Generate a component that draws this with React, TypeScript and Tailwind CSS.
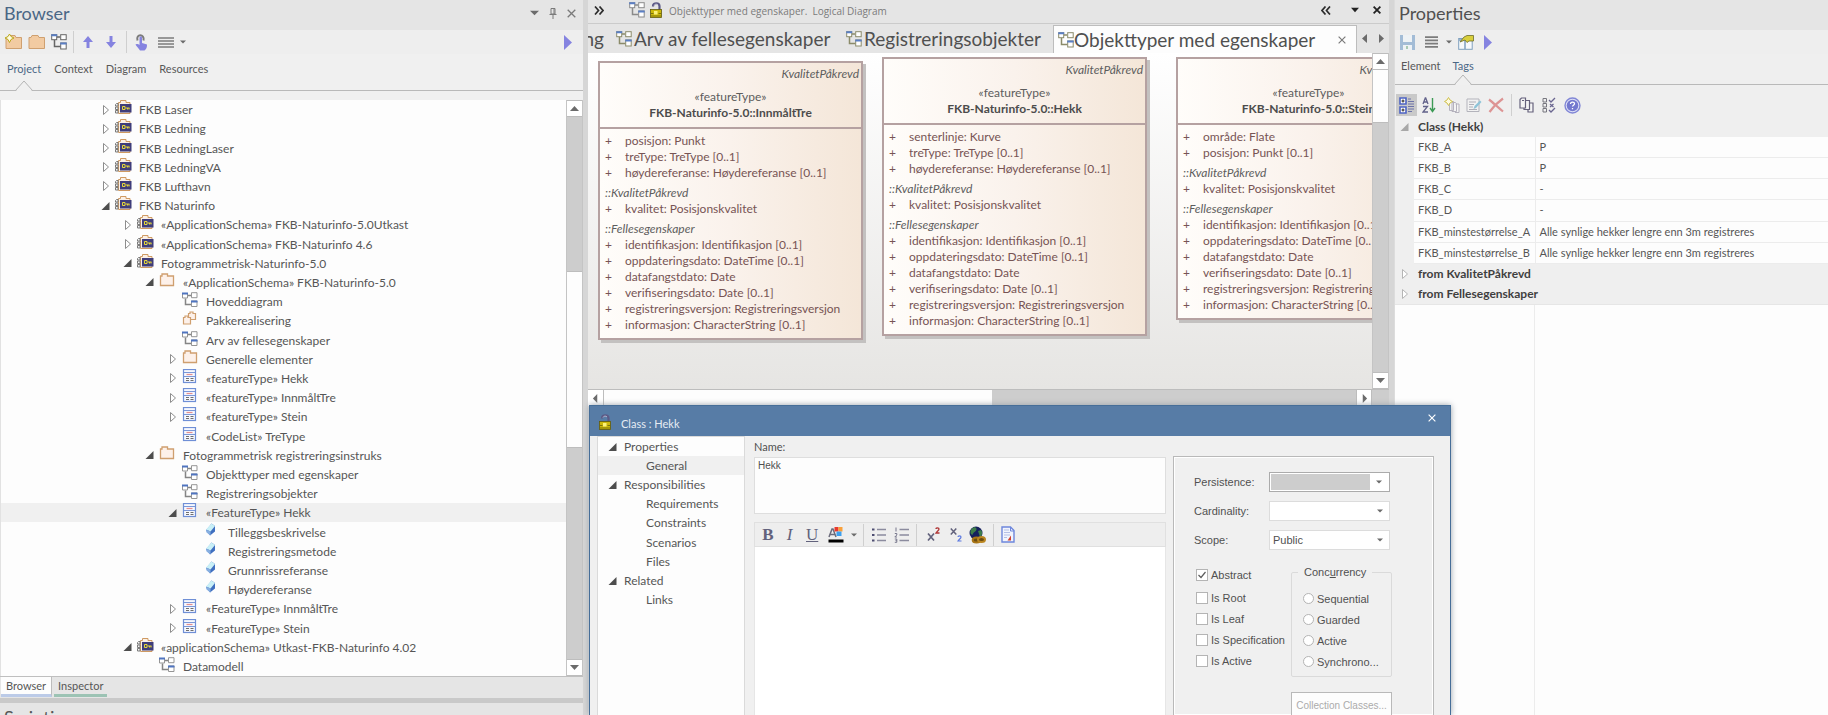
import type { ReactNode } from "react";

type IconName = "locked" | "folder" | "diagram" | "packages" | "class" | "attribute";

interface TreeItem {
  level: number;
  icon: IconName;
  label: string;
  open?: boolean;
  selected?: boolean;
}

const TREE: TreeItem[] = [
  { level: 0, icon: "locked", label: "FKB Laser", open: false },
  { level: 0, icon: "locked", label: "FKB Ledning", open: false },
  { level: 0, icon: "locked", label: "FKB LedningLaser", open: false },
  { level: 0, icon: "locked", label: "FKB LedningVA", open: false },
  { level: 0, icon: "locked", label: "FKB Lufthavn", open: false },
  { level: 0, icon: "locked", label: "FKB Naturinfo", open: true },
  { level: 1, icon: "locked", label: "«ApplicationSchema» FKB-Naturinfo-5.0Utkast", open: false },
  { level: 1, icon: "locked", label: "«ApplicationSchema» FKB-Naturinfo 4.6", open: false },
  { level: 1, icon: "locked", label: "Fotogrammetrisk-Naturinfo-5.0", open: true },
  { level: 2, icon: "folder", label: "«ApplicationSchema» FKB-Naturinfo-5.0", open: true },
  { level: 3, icon: "diagram", label: "Hoveddiagram" },
  { level: 3, icon: "packages", label: "Pakkerealisering" },
  { level: 3, icon: "diagram", label: "Arv av fellesegenskaper" },
  { level: 3, icon: "folder", label: "Generelle elementer", open: false },
  { level: 3, icon: "class", label: "«featureType» Hekk", open: false },
  { level: 3, icon: "class", label: "«featureType» InnmåltTre", open: false },
  { level: 3, icon: "class", label: "«featureType» Stein", open: false },
  { level: 3, icon: "class", label: "«CodeList» TreType" },
  { level: 2, icon: "folder", label: "Fotogrammetrisk registreringsinstruks", open: true },
  { level: 3, icon: "diagram", label: "Objekttyper med egenskaper" },
  { level: 3, icon: "diagram", label: "Registreringsobjekter" },
  { level: 3, icon: "class", label: "«FeatureType» Hekk", open: true, selected: true },
  { level: 4, icon: "attribute", label: "Tilleggsbeskrivelse" },
  { level: 4, icon: "attribute", label: "Registreringsmetode" },
  { level: 4, icon: "attribute", label: "Grunnrissreferanse" },
  { level: 4, icon: "attribute", label: "Høydereferanse" },
  { level: 3, icon: "class", label: "«FeatureType» InnmåltTre", open: false },
  { level: 3, icon: "class", label: "«FeatureType» Stein", open: false },
  { level: 1, icon: "locked", label: "«applicationSchema» Utkast-FKB-Naturinfo 4.02", open: true },
  { level: 2, icon: "diagram", label: "Datamodell" },
];

const INDENT = ["pl-[100px]", "pl-[122px]", "pl-[144px]", "pl-[167px]", "pl-[189px]"];

const COMMON = [
  "identifikasjon: Identifikasjon [0..1]",
  "oppdateringsdato: DateTime [0..1]",
  "datafangstdato: Date",
  "verifiseringsdato: Date [0..1]",
  "registreringsversjon: Registreringsversjon",
  "informasjon: CharacterString [0..1]",
];

/* ---------- glyphs ---------- */

function DiagramGlyph({ head = "#5b7fc4", line = "#8a8a8a" }: { head?: string; line?: string }) {
  return (
    <svg viewBox="0 0 16 16" className="h-4 w-4 shrink-0" fill="none" stroke={line}>
      <path d="M6 3h3M3.500 6v6.500h6" strokeWidth="1.500" />
      <rect x="0.700" y="0.700" width="5" height="5" fill="#fff" />
      <rect x="9.700" y="0.700" width="5.500" height="5" fill="#fff" />
      <rect x="9.700" y="9" width="5.500" height="6" fill="#fff" />
      <path d="M0.200 1.200h6M9.200 9.500h6.500" stroke={head} strokeWidth="2" />
    </svg>
  );
}

function TreeGlyph({ name }: { name: IconName }) {
  return (
    <svg viewBox="0 0 18 19" className="h-[19px] w-[18px] shrink-0" fill="none">
      {name === "locked" && (
        <>
          <path d="M4.500 13.500v-11h2v-2h5.500v2h4v11z" stroke="#cf9a62" fill="#fbf0e6" />
          <path d="M2.500 3.500h1.500v2.500H1.500V4.500zM1.500 7h2.500v2.500H1.500zM1.500 10.500h2.500V13H1.500z" stroke="#7a7a7a" fill="#f4f4f4" />
          <rect x="6" y="4" width="11.500" height="8.500" fill="#3f3d7a" />
          <path d="M8.500 6.500h2.500v3H8.500zM11.500 8h4M13.500 8v1.500M15 8v1.500" stroke="#e6d83a" />
        </>
      )}
      {name === "folder" && (
        <path d="M2.500 12.500V3h1.500V1h5.500v2h6v9.500z" stroke="#cf9f6f" fill="#fdf1ea" strokeWidth="1.300" />
      )}
      {name === "diagram" && (
        <>
          <path d="M7 3.500h3M4.500 6.500v6h6" stroke="#858585" strokeWidth="1.500" />
          <path d="M1.500 1.500h5v4.500h-5zM10.500 0.700h5.500v5h-5.500zM10.500 9h5.500v5.500h-5.500z" stroke="#959595" fill="#fff" />
          <path d="M1 1.500h6M10 9.500h6.500" stroke="#4f74c0" strokeWidth="2" />
        </>
      )}
      {name === "packages" && (
        <g stroke="#cf9f6f" fill="#fdf1ea" strokeWidth="1.200">
          <path d="M7.500 8.500v-6h1.500V1h3v1.500h2.500v6z" />
          <path d="M2.500 13V6.500H4V5h3v1.500h2.500V13z" />
        </g>
      )}
      {name === "class" && (
        <>
          <rect x="2.500" y="0.500" width="12" height="13" fill="#f6f8fe" stroke="#6f8fd6" strokeWidth="1.200" />
          <path d="M3 3.500h11M3 7.500h11" stroke="#7a97d8" />
          <path d="M5.500 5.500h6" stroke="#e58f8f" strokeWidth="1.200" />
          <path d="M5 9.500h3M9.500 9.500h3M5 11.500h3M9.500 11.500h3" stroke="#6f6f6f" />
        </>
      )}
      {name === "attribute" && (
        <>
          <path d="M3 7.500 8.500 0.500 12 3v5.500L7 12.500z" fill="#3f6fc0" />
          <path d="M3 6.500 8.500 0.500 12 3 7.500 8.500z" fill="#c9f0f7" />
          <path d="M3 6.500 7.500 8.500v4L3.500 9.500z" fill="#86aee0" />
        </>
      )}
    </svg>
  );
}

function Twisty({ open, faint = false }: { open?: boolean; faint?: boolean }) {
  return (
    <svg viewBox="0 0 9 10" className="h-[10px] w-[9px] shrink-0" fill="none">
      {open === true && <path d="M8.500 1v8H0.500z" fill={faint ? "#a8a8a8" : "#4d4d4d"} />}
      {open === false && <path d="M2.500 0.500 7.500 5 2.500 9.500z" stroke={faint ? "#b5b5b5" : "#8d8d8d"} fill="#fff" />}
    </svg>
  );
}

function Caret({ dir = "down", color = "#6b6b6b", size = "h-[7px] w-[9px]" }: { dir?: "up" | "down" | "left" | "right"; color?: string; size?: string }) {
  const d = { up: "M0 6h8L4 1z", down: "M0 1h8L4 6z", left: "M6 0v7L1 3.500z", right: "M2 0v7l5-3.500z" }[dir];
  return (
    <svg viewBox="0 0 8 7" className={`${size} shrink-0`} preserveAspectRatio="none">
      <path d={d} fill={color} />
    </svg>
  );
}

function CloseGlyph({ color = "#7a7a7a", size = "h-[9px] w-[9px]", weight = 1.3 }: { color?: string; size?: string; weight?: number }) {
  return (
    <svg viewBox="0 0 9 9" className={`${size} shrink-0`}>
      <path d="m0.700 0.700 7.600 7.600m0-7.600-7.600 7.600" stroke={color} strokeWidth={weight} />
    </svg>
  );
}

function Lock() {
  return (
    <svg viewBox="0 0 12 16" className="h-4 w-3 shrink-0" fill="none">
      <path d="M3 4.500V4c0-3.700 6.500-3.700 6.500 0v4" stroke="#5c5a86" strokeWidth="2.200" />
      <path d="M4 3.500c0.500-1.500 3-2 4-0.500" stroke="#c8c6dc" strokeWidth="0.800" />
      <rect x="0.500" y="7.500" width="11" height="8" fill="#cdb90a" stroke="#5f5a10" strokeWidth="0.800" />
      <path d="M4 9h3.500v3.500H4z" fill="#fbf27a" />
      <path d="M1 11.500h2.500M8.500 11.500H11M1 14h10" stroke="#7d740a" />
    </svg>
  );
}

function MenuGlyph({ size = "h-[11px] w-4" }: { size?: string }) {
  return (
    <svg viewBox="0 0 16 11" className={`${size} shrink-0`} preserveAspectRatio="none">
      <path d="M0 1h16M0 4h16M0 7h16M0 10h16" stroke="#7c7c7c" strokeWidth="1.500" />
    </svg>
  );
}

function Play() {
  return (
    <svg viewBox="0 0 8 15" className="h-[15px] w-2 shrink-0">
      <path d="M0 0v15l8-7.500z" fill="#8583e0" />
    </svg>
  );
}

function FolderGlyph({ star = false }: { star?: boolean }) {
  return (
    <svg viewBox="0 0 17 16" className="h-4 w-[17px] shrink-0">
      <path d="M1 14.500v-11h2l1-2h6l1 2h5.500v11z" fill="#f2cba2" stroke="#cfa070" />
      {star && <path d="M4.500 0 6 2.500 9 4 6 5.500 4.500 8.500 3 5.500 0 4l3-1.500z" fill="#fffbe0" stroke="#b9a81c" />}
    </svg>
  );
}

function Arrow({ down = false }: { down?: boolean }) {
  return (
    <svg viewBox="0 0 10 12" className="h-3 w-[10px] shrink-0">
      <path d={down ? "M3.500 0h3v6H10l-5 6-5-6h3.500z" : "M3.500 12h3V6H10L5 0 0 6h3.500z"} fill="#8583e0" />
    </svg>
  );
}

function Notch() {
  return (
    <svg viewBox="0 0 18 11" className="absolute -bottom-px left-1/2 h-[11px] w-[18px] -translate-x-1/2" fill="none">
      <path d="M1 11 9 1l8 10z" fill="#f0f0f0" />
      <path d="M0.500 10.500 9 1l8.500 9.500" stroke="#b4b4b4" />
    </svg>
  );
}

/* ---------- shared parts ---------- */

function IconButton({ label, className = "", children }: { label: string; className?: string; children: ReactNode }) {
  return (
    <button type="button" aria-label={label} className={`flex shrink-0 items-center justify-center ${className}`}>
      {children}
    </button>
  );
}

function PanelTab({ label, active = false }: { label: string; active?: boolean }) {
  return (
    <button type="button" className={`relative flex h-full justify-center text-[11px] leading-4 ${active ? "text-[#4a6785]" : "text-[#585858]"}`}>
      {label}
      {active && <Notch />}
    </button>
  );
}

function Separator() {
  return <span className="block h-[22px] w-px shrink-0 bg-[#cfcfcf]" />;
}

/* ---------- browser ---------- */

function BrowserPanel() {
  return (
    <section className="flex w-[583px] shrink-0 flex-col bg-[#f0f0f0]">
      <header className="flex h-[30px] shrink-0 items-center bg-[#e5e5e5] pr-[7px] pb-1 pl-1">
        <h1 className="flex-1 text-[18px] leading-6 text-[#4a6785]">Browser</h1>
        <div className="flex items-center gap-[10px]">
          <IconButton label="Window options"><Caret size="h-[6px] w-[9px]" /></IconButton>
          <IconButton label="Pin">
            <svg viewBox="0 0 8 11" className="h-[11px] w-2" fill="none" stroke="#7a7a7a">
              <path d="M2 0.500h4v5.500H2zM0.500 6.500h7M4 7v4M5 1v5" />
            </svg>
          </IconButton>
          <IconButton label="Close"><CloseGlyph /></IconButton>
        </div>
      </header>
      <div className="flex h-6 shrink-0 items-center bg-[#eeeeee] pr-[11px] pl-[5px]">
        <IconButton label="New package"><FolderGlyph star /></IconButton>
        <IconButton label="New model" className="ml-[6px]"><FolderGlyph /></IconButton>
        <IconButton label="New diagram" className="mr-[6px] ml-[6px]"><DiagramGlyph line="#666" /></IconButton>
        <Separator />
        <IconButton label="Move up" className="ml-[9px]"><Arrow /></IconButton>
        <IconButton label="Move down" className="mr-[10px] ml-[13px]"><Arrow down /></IconButton>
        <Separator />
        <IconButton label="Locate" className="ml-2">
          <svg viewBox="0 0 13 17" className="h-[17px] w-[13px]">
            <path d="M2.500 6.500c-2-7 7.500-7 6 0" fill="none" stroke="#7c7c7c" strokeWidth="2" />
            <path d="M4.500 3.500c0-1.500 2.500-1.500 2.500 0V9l5 1.500c0 3-0.500 4.500-2.500 6H5C4 14.500 1 12 0.500 10.500 1 9.500 3.500 10 4.500 11z" fill="#8583e0" />
          </svg>
        </IconButton>
        <IconButton label="Menu" className="ml-[10px] gap-[6px]"><MenuGlyph /><Caret size="h-1 w-[6px]" /></IconButton>
        <span className="flex-1" />
        <IconButton label="Expand"><Play /></IconButton>
      </div>
      <nav className="flex h-[37px] shrink-0 gap-[13px] border-b border-[#b9b9b9] pt-[7px] pl-[7px]">
        <PanelTab label="Project" active />
        <PanelTab label="Context" />
        <PanelTab label="Diagram" />
        <PanelTab label="Resources" />
      </nav>
      <div className="mt-[9px] flex min-h-0 flex-1 border-l border-[#e2e2e2]">
        <ul className="flex min-w-0 flex-1 flex-col bg-[#fdfdfd] text-[12px] leading-[19px] text-[#565656]">
          {TREE.map((item, i) => (
            <li key={i} className={`flex min-h-0 flex-1 items-center ${INDENT[item.level]} ${item.selected ? "bg-[#f0f0f0]" : ""}`}>
              <Twisty open={item.open} />
              <span className="ml-1 flex items-center gap-[7px] whitespace-nowrap">
                <TreeGlyph name={item.icon} />
                {item.label}
              </span>
            </li>
          ))}
        </ul>
        <div className="flex w-[17px] flex-col border-x border-[#c4c4c4] bg-[#cdcdcd]">
          <IconButton label="Scroll up" className="h-[17px] border-y border-[#bdbdbd] bg-white"><Caret dir="up" /></IconButton>
          <span className="flex-[155]" />
          <span className="flex-[176] border-y border-[#bdbdbd] bg-[#fdfdfd]" />
          <span className="flex-[213]" />
          <IconButton label="Scroll down" className="h-[17px] border-y border-[#bdbdbd] bg-white"><Caret /></IconButton>
        </div>
      </div>
      <div className="flex h-[22px] shrink-0 border-t border-[#bfbfbf] bg-[#e5e5e5] text-[11px] leading-4 text-[#565656]">
        <button type="button" className="ml-px h-5 border-r border-b-[3px] border-r-[#bdbdbd] border-b-[#bccbe8] bg-[#fdfdfd] px-[5px]">Browser</button>
        <button type="button" className="ml-[2px] h-5 border-b-[3px] border-[#9cc3b4] px-1">Inspector</button>
      </div>
      <div className="h-[5px] shrink-0 bg-[#c9c9c9]" />
      <div className="h-3 shrink-0 overflow-hidden bg-[#e5e5e5] pt-[2px] pl-1">
        <h2 className="text-[18px] leading-6 text-[#565656]">Scripting</h2>
      </div>
    </section>
  );
}

/* ---------- diagram ---------- */

function AttributeList({ items }: { items: string[] }) {
  return (
    <ul>
      {items.map((text) => (
        <li key={text} className="flex whitespace-nowrap">
          <span className="w-5">+</span>
          {text}
        </li>
      ))}
    </ul>
  );
}

function ClassBox({ name, own, place }: { name: string; own: string[]; place: string }) {
  return (
    <article className={`absolute w-[265px] border-2 border-[#b5a1a1] bg-linear-to-r from-[#fffdfa] via-[#faf2ec] to-[#f4e6d8] text-[12px] leading-4 text-[#775454] shadow-[3px_3px_0_#c3c1c0] ${place}`}>
      <header className="border-b-2 border-[#b5a1a1] pb-[6px] text-center text-[#5d5d5d]">
        <p className="pt-[3px] pr-[2px] text-right italic">KvalitetPåkrevd</p>
        <p className="pt-[7px]">«featureType»</p>
        <h3 className="font-bold text-[#4c4c4c]">FKB-Naturinfo-5.0::{name}</h3>
      </header>
      <div className="pt-1 pb-[5px] pl-[5px]">
        <AttributeList items={own} />
        <p className="pt-1 text-[#5d5d5d] italic">::KvalitetPåkrevd</p>
        <AttributeList items={["kvalitet: Posisjonskvalitet"]} />
        <p className="pt-1 text-[#5d5d5d] italic">::Fellesegenskaper</p>
        <AttributeList items={COMMON} />
      </div>
    </article>
  );
}

function DiagramTab({ label, width }: { label: string; width: string }) {
  return (
    <button type="button" className={`flex shrink-0 items-center gap-[2px] pl-[5px] ${width}`}>
      <DiagramGlyph line="#8b8b6a" />
      {label}
    </button>
  );
}

function DiagramArea() {
  return (
    <main className="flex min-w-0 flex-1 flex-col border-x-[5px] border-[#d6d6d6] bg-[#e5e5e5]">
      <header className="flex h-6 shrink-0 items-center border-b border-[#cbcbcb] pr-2 pb-[3px] pl-[6px]">
        <IconButton label="Show panels">
          <svg viewBox="0 0 10 9" className="h-[9px] w-[10px]" fill="none" stroke="#2d2d2d" strokeWidth="1.700">
            <path d="m1 0.500 3.500 4L1 8.500M5.500 0.500l3.500 4-3.500 4" />
          </svg>
        </IconButton>
        <span className="ml-[25px] flex items-center gap-[5px]">
          <DiagramGlyph />
          <Lock />
        </span>
        <p className="ml-[7px] flex-1 pt-[2px] font-['Open_Sans',sans-serif] text-[10px] leading-4 whitespace-pre text-[#7b7b7b]">Objekttyper med egenskaper.  Logical Diagram</p>
        <IconButton label="Hide panels">
          <svg viewBox="0 0 10 9" className="h-[9px] w-[10px]" fill="none" stroke="#2d2d2d" strokeWidth="1.700">
            <path d="m4.500 0.500-3.500 4 3.500 4M9 0.500l-3.500 4 3.500 4" />
          </svg>
        </IconButton>
        <IconButton label="Diagram options" className="ml-5"><Caret color="#222" size="h-[6px] w-2" /></IconButton>
        <IconButton label="Close diagram" className="ml-[14px]"><CloseGlyph color="#222" size="h-2 w-2" weight={2} /></IconButton>
      </header>
      <div className="flex h-[29px] shrink-0 text-[19px] leading-6 text-[#505050]">
        <div className="flex min-w-0 flex-1 justify-end overflow-hidden">
          <button type="button" className="shrink-0 pr-[7px]">ng</button>
          <DiagramTab label="Arv av fellesegenskaper" width="w-[230px]" />
          <DiagramTab label="Registreringsobjekter" width="w-[212px]" />
          <div className="mt-px flex w-[304px] shrink-0 items-center border-x border-t border-[#bdbdbd] bg-[#fdfdfd] pr-[10px] pl-1">
            <button type="button" className="flex flex-1 items-center">
              <DiagramGlyph line="#8b8b6a" />
              Objekttyper med egenskaper
            </button>
            <IconButton label="Close tab"><CloseGlyph size="h-2 w-2" /></IconButton>
          </div>
        </div>
        <div className="flex w-8 shrink-0 items-center gap-2 pl-1">
          <IconButton label="Previous tab"><Caret dir="left" size="h-[9px] w-2" /></IconButton>
          <IconButton label="Next tab"><Caret dir="right" size="h-[9px] w-2" /></IconButton>
        </div>
      </div>
      <div className="flex h-[336px] shrink-0">
        <div className="relative min-w-0 flex-1 overflow-hidden bg-linear-to-b from-white to-[#e6e5e3]">
          <ClassBox name="InnmåltTre" own={["posisjon: Punkt", "treType: TreType [0..1]", "høydereferanse: Høydereferanse [0..1]"]} place="top-2 left-[10px]" />
          <ClassBox name="Hekk" own={["senterlinje: Kurve", "treType: TreType [0..1]", "høydereferanse: Høydereferanse [0..1]"]} place="top-1 left-[294px]" />
          <ClassBox name="Stein" own={["område: Flate", "posisjon: Punkt [0..1]"]} place="top-1 left-[588px]" />
        </div>
        <div className="flex w-[17px] flex-col border-x border-[#c4c4c4] bg-[#cdcdcd]">
          <IconButton label="Scroll up" className="h-[17px] border-y border-[#bdbdbd] bg-white"><Caret dir="up" /></IconButton>
          <span className="h-[53px] border-b border-[#bdbdbd] bg-[#fdfdfd]" />
          <span className="flex-1" />
          <IconButton label="Scroll down" className="h-[17px] border-y border-[#bdbdbd] bg-white"><Caret /></IconButton>
        </div>
      </div>
      <div className="flex h-[17px] shrink-0 border-t border-[#bdbdbd] bg-[#cdcdcd] pr-[17px]">
        <IconButton label="Scroll left" className="w-4 border-r border-[#bdbdbd] bg-white"><Caret dir="left" size="h-[9px] w-[7px]" /></IconButton>
        <span className="flex-[388] bg-[#fdfdfd]" />
        <span className="flex-[364]" />
        <IconButton label="Scroll right" className="w-4 border-x border-[#bdbdbd] bg-white"><Caret dir="right" size="h-[9px] w-[7px]" /></IconButton>
      </div>
    </main>
  );
}

/* ---------- properties ---------- */

const TAGS: [string, string][] = [
  ["FKB_A", "P"],
  ["FKB_B", "P"],
  ["FKB_C", "-"],
  ["FKB_D", "-"],
  ["FKB_minstestørrelse_A", "Alle synlige hekker lengre enn 3m registreres"],
  ["FKB_minstestørrelse_B", "Alle synlige hekker lengre enn 3m registreres"],
];

function GroupRow({ label, open }: { label: string; open: boolean }) {
  return (
    <tr>
      <td className="w-[19px] pl-[5px]"><Twisty open={open} faint /></td>
      <th scope="rowgroup" colSpan={2} className="pl-1 text-left text-[12px] font-bold text-[#3f3f3f]">{label}</th>
    </tr>
  );
}

function PropertiesPanel() {
  return (
    <aside className="flex w-[434px] shrink-0 flex-col border-l border-[#dcdcdc] bg-[#efefef]">
      <header className="flex h-[30px] shrink-0 items-center bg-[#e5e5e5] pb-1 pl-1">
        <h1 className="text-[18px] leading-6 text-[#505050]">Properties</h1>
      </header>
      <div className="flex h-6 shrink-0 items-center bg-[#eeeeee] pl-[5px]">
        <IconButton label="Save">
          <svg viewBox="0 0 15 15" className="h-[15px] w-[15px]">
            <path d="M0 0h15v15H0z" fill="#a3bcd6" />
            <path d="M3 0h9v7H3z" fill="#eef2f5" />
            <path d="M3 10h9v5H3z" fill="#eef2f5" />
            <path d="M6 11h2v3H6z" fill="#a9c9b4" />
          </svg>
        </IconButton>
        <IconButton label="Menu" className="ml-[10px] gap-2"><MenuGlyph size="h-3 w-[13px]" /><Caret size="h-1 w-[6px]" /></IconButton>
        <IconButton label="Edit properties" className="ml-[6px]">
          <svg viewBox="0 0 16 15" className="h-[15px] w-4">
            <rect x="0.700" y="3.500" width="13.500" height="10.800" fill="#f7fafc" stroke="#7fa0bf" />
            <path d="M1 5h13M7 6v8" stroke="#7fa0bf" strokeWidth="1.500" />
            <path d="M2 7 6 2l3-1.500h6.500V6H11L9 7.500 7 5z" fill="#d8cf3c" stroke="#6f6d2c" strokeWidth="0.800" />
          </svg>
        </IconButton>
        <IconButton label="Run" className="ml-[10px]"><Play /></IconButton>
      </div>
      <nav className="flex h-[31px] shrink-0 gap-3 border-b border-[#b9b9b9] pt-1 pl-[6px]">
        <PanelTab label="Element" />
        <PanelTab label="Tags" active />
      </nav>
      <div className="mt-2 flex h-6 shrink-0 items-center pl-px">
        <IconButton label="Group by category" className="h-[22px] w-[21px] bg-[#c9c9c9]">
          <svg viewBox="0 0 16 17" className="h-[17px] w-4" fill="none">
            <path d="M1 1h6v6H1zM1 10h6v6H1z" stroke="#4d63c4" strokeWidth="1.600" fill="#fff" />
            <path d="M2.500 4h3M4 2.500v3M2.500 13h3M4 11.500v3" stroke="#222" />
            <path d="M9 2h3M9 4.500h6M9 7h6M9 9.500h6M9 12h6M9 14.500h4" stroke="#6d73a8" />
          </svg>
        </IconButton>
        <IconButton label="Sort alphabetically" className="ml-[5px]">
          <svg viewBox="0 0 14 16" className="h-4 w-[14px]" fill="none">
            <path d="m1 7 2.300-6h0.400L6 7M2 5h3M1 9.500h4.500L1 15h5" stroke="#62628a" strokeWidth="1.300" />
            <path d="M10.500 1v13M8 11l2.500 3.500L13 11" stroke="#3c9a55" strokeWidth="1.400" />
          </svg>
        </IconButton>
        <IconButton label="New tag" className="ml-2">
          <svg viewBox="0 0 16 16" className="h-4 w-4" fill="none">
            <path d="M5.500 4.500h4v9h-4zM8 5.500h3.500l1 1v8H8zM11.500 7h3.500v8.500h-4" stroke="#b5b2bd" fill="#f4f4f4" />
            <path d="M4.500 0.500 6 3l2.500 1.500L6 6 4.500 8.500 3 6 0.500 4.500 3 3z" fill="#fffbe0" stroke="#cfc04a" />
          </svg>
        </IconButton>
        <IconButton label="Edit tag" className="ml-[6px]">
          <svg viewBox="0 0 16 16" className="h-4 w-4" fill="none">
            <path d="M1 2h12v12.500H1z" stroke="#b3b3bb" fill="#f2f2f2" />
            <path d="M3 5h7M3 7.500h5M3 10h4M3 12.500h8" stroke="#b0b0b8" />
            <path d="m7.500 12 1-3L14 3.500l1.500 1.500L10 11z" fill="#8fc4d8" />
          </svg>
        </IconButton>
        <IconButton label="Delete tag" className="ml-[6px]">
          <svg viewBox="0 0 16 16" className="h-4 w-4" fill="none">
            <path d="M1 2.500c4 3 9 8 14 12M15 1.500C10 5 5 10 1.500 15" stroke="#dd9494" strokeWidth="2.200" />
          </svg>
        </IconButton>
        <span className="mx-[7px]"><Separator /></span>
        <IconButton label="Copy tags">
          <svg viewBox="0 0 15 16" className="h-4 w-[15px]" fill="none" stroke="#66627c" strokeWidth="1.200">
            <path d="M9 6h5v9H9z" fill="#f4f4f4" />
            <path d="M5 3.500h5.500v9H5z" fill="#f4f4f4" />
            <path d="M1 2.500 2.500 1h4v10H1zM3 3.500h2" fill="#f4f4f4" />
          </svg>
        </IconButton>
        <IconButton label="Tag options" className="ml-2">
          <svg viewBox="0 0 14 16" className="h-4 w-[14px]" fill="none">
            <path d="M1 1.500h3.500V5H1zM1 6.500h3.500V10H1zM1 11.500h3.500V15H1z" stroke="#77777f" />
            <path d="m7 3 2 2 4-4M8 7l3.500 3M11.500 7 8 10M7 13l2 2 4-4" stroke="#6a6690" strokeWidth="1.300" />
          </svg>
        </IconButton>
        <IconButton label="Help" className="ml-2">
          <svg viewBox="0 0 17 17" className="h-[17px] w-[17px]" fill="none">
            <circle cx="8.500" cy="8.500" r="7.500" fill="#dfe1f6" stroke="#8287d6" strokeWidth="1.400" />
            <circle cx="8.500" cy="8.500" r="5.800" fill="#7479cf" />
            <path d="M6.500 7c0-2.500 4-2.500 4-0.300 0 1.500-2 1.500-2 2.800M8.500 11v1.200" stroke="#fff" strokeWidth="1.300" />
          </svg>
        </IconButton>
      </div>
      <table className="h-[187px] w-full shrink-0 table-fixed border-collapse text-[11px] leading-4 text-[#565656]">
        <colgroup>
          <col className="w-[19px]" />
          <col className="w-[121px]" />
          <col />
        </colgroup>
        <tbody>
          <GroupRow label="Class (Hekk)" open />
          {TAGS.map(([name, value]) => (
            <tr key={name}>
              <td />
              <th scope="row" className="border-r border-b border-[#ececec] bg-[#fdfdfd] pl-1 text-left font-normal whitespace-nowrap">{name}</th>
              <td className="border-b border-[#ececec] bg-[#fdfdfd] pl-1">{value}</td>
            </tr>
          ))}
          <GroupRow label="from KvalitetPåkrevd" open={false} />
          <GroupRow label="from Fellesegenskaper" open={false} />
        </tbody>
      </table>
      <div className="flex flex-1 border-t border-[#e6e6e6] bg-[#fdfdfd]">
        <div className="w-[140px] border-r border-[#ececec]" />
      </div>
    </aside>
  );
}

/* ---------- class dialog ---------- */

const DIALOG_NAV: { label: string; group?: boolean; selected?: boolean }[] = [
  { label: "Properties", group: true },
  { label: "General", selected: true },
  { label: "Responsibilities", group: true },
  { label: "Requirements" },
  { label: "Constraints" },
  { label: "Scenarios" },
  { label: "Files" },
  { label: "Related", group: true },
  { label: "Links" },
];

function Field({ id, label, value, disabled = false }: { id: string; label: string; value: string; disabled?: boolean }) {
  return (
    <div className="flex h-[29px] items-center">
      <label htmlFor={id} className="w-[75px] shrink-0">{label}</label>
      <div className={`grid h-5 w-[121px] items-center border bg-white ${disabled ? "border-[#ababab] p-px" : "border-[#dcdcdc]"}`}>
        <select id={id} disabled={disabled} defaultValue={value} className={`col-start-1 row-start-1 h-full appearance-none pl-[3px] text-[#505050] ${disabled ? "mr-[18px] bg-[#cdcdcd]" : ""}`}>
          <option value={value}>{value}</option>
        </select>
        <span className="pointer-events-none col-start-1 row-start-1 mr-[6px] justify-self-end"><Caret size="h-1 w-[6px]" /></span>
      </div>
    </div>
  );
}

function Check({ label, checked = false }: { label: string; checked?: boolean }) {
  return (
    <label className="flex h-[21px] items-center gap-[3px] whitespace-nowrap">
      <span className="grid items-center justify-items-center">
        <input type="checkbox" defaultChecked={checked} className="col-start-1 row-start-1 h-3 w-3 appearance-none border border-[#b4b4b4] bg-white" />
        {checked && (
          <svg viewBox="0 0 8 8" className="pointer-events-none col-start-1 row-start-1 h-2 w-2" fill="none">
            <path d="m0.500 4 2.500 2.500L7.500 1" stroke="#5c5c5c" strokeWidth="1.200" />
          </svg>
        )}
      </span>
      {label}
    </label>
  );
}

function FormatBar() {
  return (
    <div className="flex h-[25px] shrink-0 items-center border border-[#e0e0e0] bg-[#eeeeee] pl-[7px] font-['Liberation_Serif',serif] text-[17px] leading-5 text-[#62627c]">
      <button type="button" className="w-3 font-bold">B</button>
      <button type="button" className="ml-[11px] w-[9px] italic">I</button>
      <button type="button" className="ml-3 w-3 underline">U</button>
      <IconButton label="Text colour" className="ml-[10px] gap-[7px]">
        <svg viewBox="0 0 16 17" className="h-[17px] w-4" fill="none">
          <path d="M1 11 4 3h1l3 8M2 8.500h5" stroke="#6c6c7c" strokeWidth="1.500" />
          <path d="M6.500 1h4v4.500h-4z" fill="#e8392e" />
          <path d="M10.500 1h4v4.500h-4z" fill="#f9a03a" />
          <path d="M8.500 5.500h5v4.500h-5z" fill="#3ea0ef" />
          <path d="M0.500 13.500h15v3h-15z" fill="#000" />
        </svg>
        <Caret size="h-1 w-[6px]" />
      </IconButton>
      <span className="mr-2 ml-[6px]"><Separator /></span>
      <IconButton label="Bulleted list">
        <svg viewBox="0 0 14 14" className="h-[14px] w-[14px]">
          <path d="M0 1.500h2.500M0 7h2.500M0 12.500h2.500" stroke="#4e4e72" strokeWidth="2.200" />
          <path d="M5 1.500h9M5 7h9M5 12.500h9" stroke="#8b8b9e" strokeWidth="1.300" />
        </svg>
      </IconButton>
      <IconButton label="Numbered list" className="ml-2">
        <svg viewBox="0 0 15 16" className="h-4 w-[15px]" fill="none">
          <path d="M2 0.500v4M0.800 6.500h2v1.500l-2 2h2.200M0.800 12h2v3.300h-2M1.500 13.600h1.300" stroke="#77778c" />
          <path d="M5.500 2.500H15M5.500 8H15M5.500 13.500H15" stroke="#8b8b9e" strokeWidth="1.300" />
        </svg>
      </IconButton>
      <span className="mr-[10px] ml-[7px]"><Separator /></span>
      <IconButton label="Superscript">
        <svg viewBox="0 0 13 15" className="h-[15px] w-[13px]" fill="none">
          <path d="m1 6.500 6 7M7 6.500l-6 7" stroke="#62627c" strokeWidth="1.700" />
          <path d="M9 2c0-1.500 3-1.500 3 0s-2 2-3 4h3.500" stroke="#b03636" strokeWidth="1.300" />
        </svg>
      </IconButton>
      <IconButton label="Subscript" className="ml-[10px]">
        <svg viewBox="0 0 12 15" className="h-[15px] w-3" fill="none">
          <path d="m0.800 1.500 5.500 6M6.300 1.500l-5.500 6" stroke="#62627c" strokeWidth="1.500" />
          <path d="M8 10c0-1.500 3-1.500 3 0s-2 2-3 4h3.500" stroke="#5b78e0" strokeWidth="1.200" />
        </svg>
      </IconButton>
      <IconButton label="Hyperlink" className="ml-[7px]">
        <svg viewBox="0 0 17 18" className="h-[18px] w-[17px]" fill="none">
          <circle cx="7" cy="7" r="6.500" fill="#16205e" />
          <path d="M2.500 3C5 0 8 1 7.500 3.500S4 6 3.500 9C1 8 1 5 2.500 3zM9 5l3-1c2 2.500 1 6-1 7z" fill="#3d7d4a" />
          <ellipse cx="7.500" cy="14" rx="3.800" ry="2.600" stroke="#a87516" strokeWidth="2" fill="#6b4c12" />
          <ellipse cx="12.500" cy="13.500" rx="3.500" ry="2.600" stroke="#bb8620" strokeWidth="2" fill="#6b4c12" />
        </svg>
      </IconButton>
      <span className="mx-[7px]"><Separator /></span>
      <IconButton label="Document">
        <svg viewBox="0 0 14 17" className="h-[17px] w-[14px]" fill="none">
          <path d="M1 1h8.500L13 4.500V16H1z" fill="#f1f4fd" stroke="#6d86dc" strokeWidth="1.400" />
          <path d="M9.500 1v4H13" stroke="#6d86dc" />
          <path d="M3 4h5M3 6.500h6M3 9h6M3 11.500h3" stroke="#b4bfe6" />
          <path d="M10 9.500v5H6.500z" fill="#d2402f" />
        </svg>
      </IconButton>
    </div>
  );
}

function ClassDialog() {
  return (
    <div role="dialog" aria-label="Class : Hekk" className="absolute top-[405px] bottom-0 left-[589px] flex w-[862px] flex-col overflow-hidden border-x border-t border-[#466e98] bg-[#f0f0f0] shadow-[0_0_6px_#9aa3ac]">
      <header className="flex h-[30px] shrink-0 bg-[#577ca6] pt-2 pl-[9px]">
        <Lock />
        <h2 className="ml-[10px] flex-1 text-[11px] leading-5 text-[#e6ecf3]">Class : Hekk</h2>
        <IconButton label="Close dialog" className="mr-[14px] h-2 w-2"><CloseGlyph color="#fff" size="h-2 w-2" /></IconButton>
      </header>
      <div className="flex min-h-0 flex-1 pl-[7px]">
        <nav className="w-[148px] shrink-0 border-x border-t border-[#dadada] bg-[#fdfdfd] text-[12px] text-[#565656]">
          <ul className="grid h-[173px] auto-rows-fr">
            {DIALOG_NAV.map(({ label, group, selected }) => (
              <li key={label} className={`flex items-center ${group ? "gap-[7px] pl-[10px]" : "pl-[48px]"} ${selected ? "bg-[#f0f0f0]" : ""}`}>
                {group && <Twisty open />}
                <a href={`#${label.toLowerCase()}`}>{label}</a>
              </li>
            ))}
          </ul>
        </nav>
        <div className="ml-[9px] flex min-w-0 flex-1 flex-col font-['Liberation_Sans',sans-serif] text-[11px] leading-4 text-[#505050]">
          <label htmlFor="class-name" className="pt-[3px] pb-[2px] font-[Lato,sans-serif]">Name:</label>
          <textarea id="class-name" defaultValue="Hekk" className="h-[57px] shrink-0 resize-none border border-[#dedede] bg-[#fdfdfd] px-[3px] text-[10px] leading-4" />
          <div className="mt-2 flex min-h-0 flex-1 flex-col">
            <FormatBar />
            <textarea aria-label="Notes" className="min-h-0 flex-1 resize-none border-x border-[#e6e6e6] bg-white" />
          </div>
        </div>
        <div className="mt-5 mr-4 ml-[7px] w-[261px] shrink-0 overflow-hidden border-x border-t border-[#b9b9b9] pt-[10px] pl-5 font-['Liberation_Sans',sans-serif] text-[11px] leading-4 text-[#505050] ring-1 ring-white ring-inset">
          <Field id="persistence" label="Persistence:" value="" disabled />
          <Field id="cardinality" label="Cardinality:" value="" />
          <Field id="scope" label="Scope:" value="Public" />
          <div className="mt-[10px] flex">
            <div className="w-[97px] shrink-0 pl-[2px]">
              <Check label="Abstract" checked />
              <div className="pt-[2px]">
                <Check label="Is Root" />
                <Check label="Is Leaf" />
                <Check label="Is Specification" />
                <Check label="Is Active" />
              </div>
            </div>
            <fieldset className="h-[113px] w-[101px] shrink-0 rounded-[2px] border border-[#dadada] pl-[11px]">
              <legend className="ml-[-5px] px-[6px]">Conc<u>u</u>rrency</legend>
              <div className="pt-2">
                {["Sequential", "Guarded", "Active", "Synchrono..."].map((option) => (
                  <label key={option} className="flex h-[21px] items-center gap-[3px]">
                    <input type="radio" name="concurrency" className="h-[11px] w-[11px] shrink-0 appearance-none rounded-full border border-[#b4b4b4] bg-white" />
                    {option}
                  </label>
                ))}
              </div>
            </fieldset>
          </div>
          <button type="button" className="mt-[15px] ml-[97px] h-7 w-[101px] border border-[#b9b9b9] bg-[#fdfdfd] text-[10px] whitespace-nowrap text-[#ababab]">Collection Classes...</button>
        </div>
      </div>
    </div>
  );
}

export default function App() {
  return (
    <div className="relative flex h-screen overflow-hidden bg-[#e5e5e5] font-[Lato,sans-serif]">
      <BrowserPanel />
      <DiagramArea />
      <PropertiesPanel />
      <ClassDialog />
    </div>
  );
}
